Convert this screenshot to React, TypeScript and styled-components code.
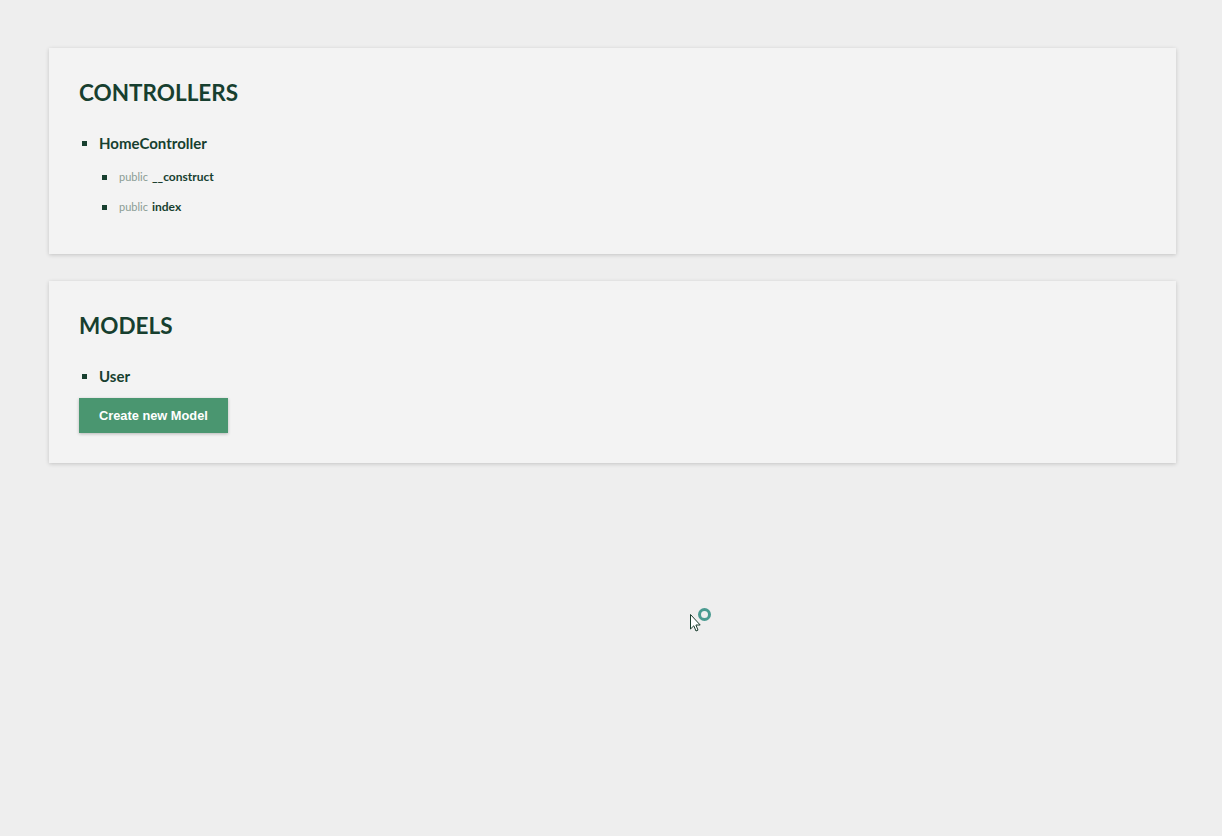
import React from "react";
import styled, { createGlobalStyle } from "styled-components";

const Global = createGlobalStyle`
  html, body { margin: 0; padding: 0; background: #eeeeee; }
  body { font-family: Lato, "Noto Sans", sans-serif; color: #173f2f; min-height: 836px; }
`;

const Page = styled.div`
  padding: 48px 46px 0 49px;
  display: flex;
  flex-direction: column;
  gap: 27px;
  position: relative;
  height: 788px;
`;

const Card = styled.section`
  background: #f3f3f3;
  box-shadow: 0 1px 4px rgba(0, 0, 0, 0.18);
  padding: 30px 30px 30px;
`;

const Title = styled.h2`
  margin: 1px 0 26px;
  font-size: 22.5px;
  line-height: 28px;
  font-weight: 700;
  letter-spacing: 0;
  color: #173f2f;
`;

const List = styled.ul<{ $nested?: boolean }>`
  list-style: none;
  margin: ${(p) => (p.$nested ? "14px 0 7px 0" : "0")};
  padding: 0;
  display: flex;
  flex-direction: column;
  gap: ${(p) => (p.$nested ? "10px" : "0")};
`;

const Item = styled.li<{ $small?: boolean }>`
  position: relative;
  padding-left: 20px;
  font-size: ${(p) => (p.$small ? "12px" : "15px")};
  line-height: 20px;
  font-weight: 700;
  color: #173f2f;
  &::before {
    content: "";
    position: absolute;
    left: 3px;
    top: 8px;
    width: 5px;
    height: 5px;
    background: #173f2f;
  }
`;

const Line = styled.div``;

const Visibility = styled.span`
  color: #8a9c94;
  font-weight: 400;
  font-size: 11px;
  margin-right: 4px;
`;

const Button = styled.button`
  margin-top: 12px;
  align-self: flex-start;
  background: #4a9670;
  color: #ffffff;
  border: none;
  font-family: "Liberation Sans", Arial, sans-serif;
  font-size: 12.8px;
  font-weight: 700;
  height: 35px;
  padding: 0 20px;
  box-shadow: 0 1px 3px rgba(0, 0, 0, 0.25);
  cursor: pointer;
`;

const CardBody = styled.div`
  display: flex;
  flex-direction: column;
`;

const Cursor = styled.svg`
  position: absolute;
  left: 689px;
  top: 605px;
`;

export default function App() {
  return (
    <>
      <Global />
      <Page>
        <Card>
          <Title>CONTROLLERS</Title>
          <List>
            <Item>
              <Line>HomeController</Line>
              <List $nested>
                <Item $small>
                  <Visibility>public</Visibility>__construct
                </Item>
                <Item $small>
                  <Visibility>public</Visibility>index
                </Item>
              </List>
            </Item>
          </List>
        </Card>
        <Card>
          <CardBody>
            <Title>MODELS</Title>
            <List>
              <Item>User</Item>
            </List>
            <Button>Create new Model</Button>
          </CardBody>
        </Card>
        <Cursor width="26" height="30" viewBox="0 0 26 30">
          <circle cx="15.5" cy="9.5" r="5" fill="none" stroke="#4a9a90" strokeWidth="3" />
          <path d="M1.5 9.5 L1.5 24 L4.8 20.8 L7 26 L9 25.1 L6.9 20 L11.2 20 Z" fill="#ffffff" stroke="#1a3d2e" strokeWidth="1" strokeLinejoin="round" />
        </Cursor>
      </Page>
    </>
  );
}
